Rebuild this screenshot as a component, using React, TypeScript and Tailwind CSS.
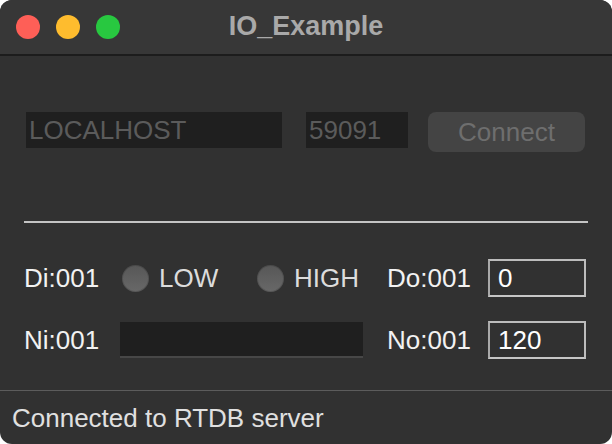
import React from "react";

const font = "font-['Liberation_Sans',Arial,sans-serif]";

const Radio = ({ label, width }: { label: string; width: string }) => (
  <div className={`flex items-center ${width}`}>
    <div className="w-[27px] h-[27px] rounded-full bg-gradient-to-b from-[#575757] to-[#686868] shadow-[inset_0_0_0_1px_rgba(0,0,0,0.15)]" />
    <span className="ml-[10px] text-[26px] text-[#dcdcdc] leading-none">{label}</span>
  </div>
);

const ValueBox = ({ value }: { value: string }) => (
  <div className="w-[98px] h-[38px] border-2 border-[#bcbcbc] border-l-[#a9a9a9] border-b-[#c6c6c6] flex items-center pl-[8px] text-[26px] text-white leading-none">
    {value}
  </div>
);

export default function App() {
  return (
    <div className={`w-[612px] h-[444px] bg-white ${font}`}>
      <div className="w-full h-full rounded-[12px] overflow-hidden bg-[#313131] flex flex-col">
        {/* title bar */}
        <div className="relative h-[56px] bg-[#373737] border-b-2 border-[#1c1c1c] flex items-center shrink-0">
          <div className="flex items-center gap-[16px] pl-[16px]">
            <div className="w-[24px] h-[24px] rounded-full bg-[#fe5f57]" />
            <div className="w-[24px] h-[24px] rounded-full bg-[#febc2e]" />
            <div className="w-[24px] h-[24px] rounded-full bg-[#28c840]" />
          </div>
          <div className="absolute inset-0 flex items-center justify-center pb-[2px]">
            <span className="text-[27px] font-bold text-[#a9a9a9] leading-none">IO_Example</span>
          </div>
        </div>

        {/* connection row */}
        <div className="flex items-start mt-[56px] pl-[26px]">
          <div className="w-[256px] h-[36px] bg-[#1f1f1f] flex items-center pl-[3px] text-[26px] text-[#5b5b5b] leading-none">
            LOCALHOST
          </div>
          <div className="ml-[24px] w-[102px] h-[36px] bg-[#1f1f1f] flex items-center pl-[3px] text-[26px] text-[#5b5b5b] leading-none">
            59091
          </div>
          <button className="ml-[20px] w-[157px] h-[40px] rounded-[8px] bg-[#444444] text-[26px] text-[#6e6e6e] leading-none flex items-center justify-center">
            Connect
          </button>
        </div>

        <div className="mt-[69px] mx-[24px] h-[2px] bg-[#c4c4c4]" />

        {/* Di / Do row */}
        <div className="flex items-center mt-[36px] pl-[24px] h-[38px]">
          <div className="w-[98px] text-[26px] text-[#f2f2f2] leading-none">Di:001</div>
          <Radio label="LOW" width="w-[135px]" />
          <Radio label="HIGH" width="w-[130px]" />
          <div className="w-[101px] text-[26px] text-[#f2f2f2] leading-none">Do:001</div>
          <ValueBox value="0" />
        </div>

        {/* Ni / No row */}
        <div className="flex items-center mt-[24px] pl-[24px] h-[38px]">
          <div className="w-[96px] text-[26px] text-[#f2f2f2] leading-none">Ni:001</div>
          <div className="w-[243px] h-[36px] bg-[#1f1f1f] border-b-2 border-[#474747]" />
          <div className="ml-[24px] w-[101px] text-[26px] text-[#f2f2f2] leading-none">No:001</div>
          <ValueBox value="120" />
        </div>

        {/* status bar */}
        <div className="mt-auto h-[54px] border-t border-[#5c5c5c] flex items-center pl-[12px] pt-[1px]">
          <span className="text-[26px] text-[#e0e0e0] leading-none">Connected to RTDB server</span>
        </div>
      </div>
    </div>
  );
}
